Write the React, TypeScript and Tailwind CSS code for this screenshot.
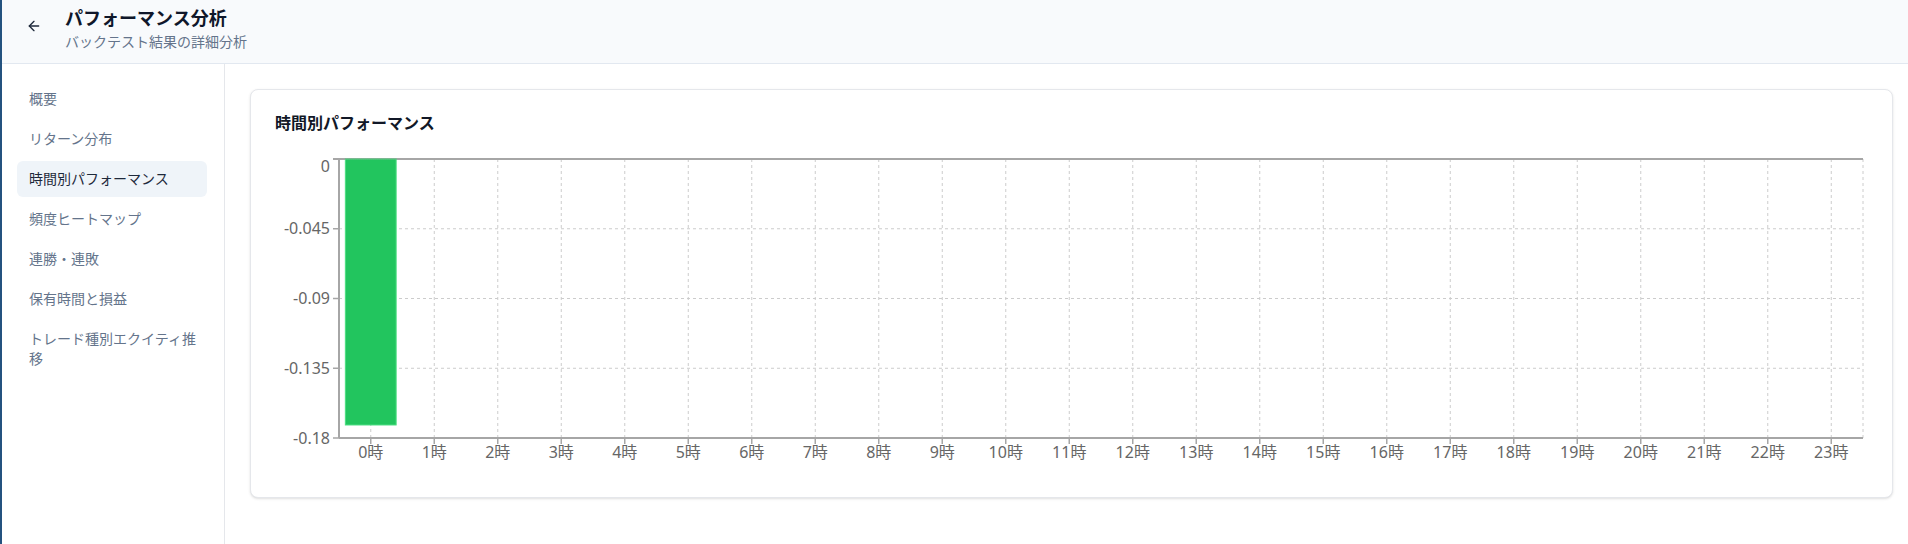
import { ArrowLeft } from 'lucide-react';

const navItems = [
  '概要',
  'リターン分布',
  '時間別パフォーマンス',
  '頻度ヒートマップ',
  '連勝・連敗',
  '保有時間と損益',
  'トレード種別エクイティ推移',
];

const hourly = Array.from({ length: 24 }, (_, h) => ({
  hour: `${h}時`,
  value: h === 0 ? -0.1716 : 0,
}));

const yTicks = [0, -0.045, -0.09, -0.135, -0.18];

function HourlyChart() {
  const W = 1593;
  const H = 327;
  const L = 64;
  const R = 1588;
  const T = 13;
  const B = 292;
  const band = (R - L) / hourly.length;
  const yOf = (v: number) => T + (-v / 0.18) * (B - T);
  const axis = '#a6a6a6';
  const grid = '#cccccc';

  return (
    <svg width={W} height={H} style={{ fontFamily: '"Noto Sans", "Noto Sans CJK JP", sans-serif' }}>
      {/* grid */}
      {yTicks.slice(1, 4).map((t) => (
        <line key={t} x1={L} x2={R} y1={yOf(t)} y2={yOf(t)} stroke={grid} strokeDasharray="3 3" />
      ))}
      {hourly.map((d, i) => {
        const x = L + band * (i + 0.5);
        return <line key={d.hour} x1={x} x2={x} y1={T} y2={B} stroke={grid} strokeDasharray="3 3" />;
      })}
      <line x1={R} x2={R} y1={T} y2={B} stroke={grid} strokeDasharray="3 3" />

      {/* zero line */}
      <line x1={L - 6} x2={R} y1={T} y2={T} stroke={axis} strokeWidth={2} />

      {/* bars */}
      {hourly.map((d, i) =>
        d.value < 0 ? (
          <g key={d.hour}>
            <rect
              x={L + band * i + band * 0.1}
              y={T}
              width={band * 0.8}
              height={yOf(d.value) - T}
              fill="#22c55e"
              stroke="#4ade80"
              strokeWidth={1}
            />
            <line
              x1={L + band * i + band * 0.1}
              x2={L + band * i + band * 0.9}
              y1={T}
              y2={T}
              stroke="#8a9a8f"
              strokeDasharray="1 1"
            />
          </g>
        ) : null
      )}

      {/* y axis */}
      <line x1={L} x2={L} y1={T} y2={B} stroke={axis} strokeWidth={2} />
      {yTicks.map((t, i) => (
        <g key={t}>
          <line x1={L - 6} x2={L} y1={yOf(t)} y2={yOf(t)} stroke={axis} strokeWidth={1.5} />
          <text
            x={L - 9}
            y={i === 0 ? yOf(t) + 7 : yOf(t)}
            dy="0.35em"
            textAnchor="end"
            fontSize={16}
            fill="#666666"
          >
            {t === 0 ? '0' : String(t)}
          </text>
        </g>
      ))}

      {/* x axis */}
      <line x1={L} x2={R} y1={B} y2={B} stroke={axis} strokeWidth={2} />
      {hourly.map((d, i) => {
        const x = L + band * (i + 0.5);
        return (
          <g key={d.hour}>
            <line x1={x} x2={x} y1={B} y2={B + 6} stroke={axis} strokeWidth={1.5} />
            <text x={x} y={B + 14} dy="0.35em" textAnchor="middle" fontSize={16} fill="#666666">
              {d.hour}
            </text>
          </g>
        );
      })}
    </svg>
  );
}

export default function App() {
  return (
    <div
      className="h-[544px] flex flex-col bg-white border-l-2 border-[#24527f] overflow-hidden"
      style={{ fontFamily: '"Noto Sans", "Noto Sans CJK JP", sans-serif' }}
    >
      <header className="h-16 shrink-0 flex items-start pt-1 pl-[16px] gap-[15px] bg-[#f8fafc] border-b border-[#e2e8f0]">
        <button className="w-8 h-[44px] flex items-center justify-center text-[#1e293b]">
          <ArrowLeft size={16} strokeWidth={2} />
        </button>
        <div className="flex flex-col">
          <h1 className="text-lg leading-7 font-bold text-[#0f172a]">パフォーマンス分析</h1>
          <p className="text-sm leading-5 text-[#64748b]">バックテスト結果の詳細分析</p>
        </div>
      </header>

      <div className="flex flex-1 min-h-0">
        <aside className="w-[223px] shrink-0 border-r border-[#e5e7eb] pl-[15px] pr-[17px] pt-[17px] flex flex-col gap-1">
          {navItems.map((item) => {
            const active = item === '時間別パフォーマンス';
            return (
              <div
                key={item}
                className={`pl-3 pr-1 py-2 text-sm leading-5 rounded-md ${
                  active ? 'bg-[#eff4f9] text-[#1e293b]' : 'text-[#64748b]'
                }`}
              >
                {item}
              </div>
            );
          })}
        </aside>

        <main className="flex-1 min-w-0 pl-[25px] pr-[15px] pt-[25px]">
          <div className="bg-white border border-[#e5e7eb] rounded-lg shadow-sm px-6 pt-[21px] pb-6">
            <h2 className="text-base leading-6 font-semibold text-[#111827]">時間別パフォーマンス</h2>
            <div className="mt-[11px]">
              <HourlyChart />
            </div>
          </div>
        </main>
      </div>
    </div>
  );
}
